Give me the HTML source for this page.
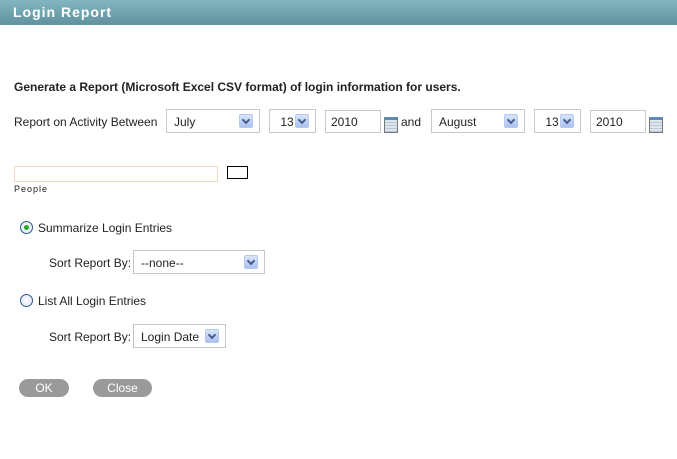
<!DOCTYPE html>
<html><head><style>
*{margin:0;padding:0;box-sizing:border-box}
body{width:677px;height:459px;background:#fff;font-family:"Liberation Sans",Arial,sans-serif;font-size:12px;color:#222;position:relative;overflow:hidden}
.a{position:absolute;white-space:nowrap}
.hdr{position:absolute;left:0;top:0;width:677px;height:25px;background:linear-gradient(#84b6c2,#5f929e);color:#fff;font-weight:bold;font-size:14px;letter-spacing:1px;padding:4px 0 0 13px}
.sel{position:absolute;border:1px solid #c8c8c8;background:#fff;height:24px;padding:5px 0 0 7px}
.arr{position:absolute;right:6px;top:4px;width:14px;height:14px;background:linear-gradient(#d8e4fb,#a9c1f3);border:1px solid #b6c8ee;border-radius:2px}
.arr:after{content:"";position:absolute;left:3px;top:2px;width:4px;height:4px;border-right:2px solid #4a5a88;border-bottom:2px solid #4a5a88;transform:rotate(45deg)}
.inp{position:absolute;border:1px solid #c8c8c8;height:23px;padding:4px 0 0 5px}
.cal{position:absolute;width:14px;height:16px;border:1px solid #777;background:repeating-linear-gradient(#dde6ee 0 2px,#b8c6d2 2px 3px);border-top:3px solid #5b8cb8}
.rad{position:absolute;width:13px;height:13px;border-radius:50%;border:1px solid #2d5d8c;background:radial-gradient(#fff,#dde)}
.btn{position:absolute;height:18px;border-radius:9px;background:#9a9a9a;color:#fff;text-align:center;padding-top:2px;font-size:12px}
</style></head><body>
<div class="hdr">Login Report</div>
<div class="a" style="left:14px;top:80px;font-weight:bold">Generate a Report (Microsoft Excel CSV format) of login information for users.</div>
<div class="a" style="left:14px;top:115px">Report on Activity Between</div>
<div class="sel" style="left:166px;top:109px;width:94px">July<div class="arr"></div></div>
<div class="sel" style="left:269px;top:109px;width:47px">&nbsp;13<div class="arr"></div></div>
<div class="inp" style="left:325px;top:110px;width:56px">2010</div>
<div class="cal" style="left:384px;top:117px"></div>
<div class="a" style="left:401px;top:115px">and</div>
<div class="sel" style="left:431px;top:109px;width:94px">August<div class="arr"></div></div>
<div class="sel" style="left:534px;top:109px;width:47px">&nbsp;13<div class="arr"></div></div>
<div class="inp" style="left:590px;top:110px;width:56px">2010</div>
<div class="cal" style="left:649px;top:117px"></div>
<div class="a" style="left:14px;top:166px;width:204px;height:16px;border:1px solid #eedcb8"></div>
<div class="a" style="left:227px;top:166px;width:21px;height:13px;border:1px solid #000"></div>
<div class="a" style="left:14px;top:184px;font-size:9px;letter-spacing:1px">People</div>
<div class="rad" style="left:20px;top:221px"><div style="position:absolute;left:3px;top:3px;width:5px;height:5px;border-radius:50%;background:#2a2"></div></div>
<div class="a" style="left:38px;top:221px">Summarize Login Entries</div>
<div class="a" style="left:49px;top:256px">Sort Report By:</div>
<div class="sel" style="left:133px;top:250px;width:132px">--none--<div class="arr"></div></div>
<div class="rad" style="left:20px;top:294px"></div>
<div class="a" style="left:38px;top:294px">List All Login Entries</div>
<div class="a" style="left:49px;top:330px">Sort Report By:</div>
<div class="sel" style="left:133px;top:324px;width:93px">Login Date<div class="arr"></div></div>
<div class="btn" style="left:19px;top:379px;width:50px">OK</div>
<div class="btn" style="left:93px;top:379px;width:59px">Close</div>
</body></html>
